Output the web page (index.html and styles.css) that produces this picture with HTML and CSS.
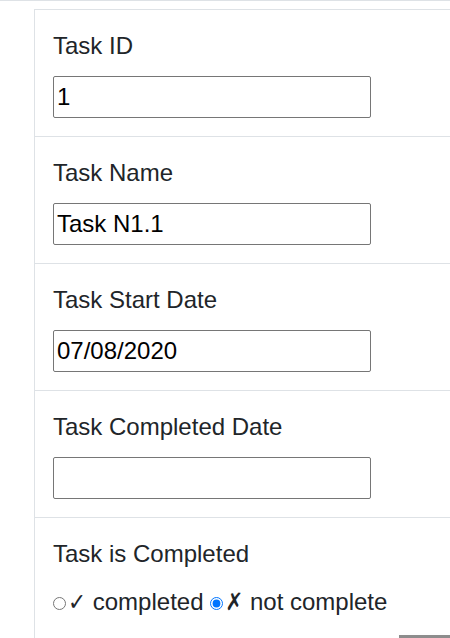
FILE: index.html
```html
<!DOCTYPE html>
<html lang="en">
<head>
<meta charset="utf-8">
<title>Task</title>
<link rel="stylesheet" href="styles.css">
</head>
<body>
<div class="topline"></div>
<div class="card">
  <div class="row">
    <label class="lbl" for="tid">Task ID</label>
    <input class="field" id="tid" type="text" value="1">
  </div>
  <div class="row">
    <label class="lbl" for="tname">Task Name</label>
    <input class="field" id="tname" type="text" value="Task N1.1">
  </div>
  <div class="row">
    <label class="lbl" for="tstart">Task Start Date</label>
    <input class="field" id="tstart" type="text" value="07/08/2020">
  </div>
  <div class="row">
    <label class="lbl" for="tdone">Task Completed Date</label>
    <input class="field" id="tdone" type="text" value="">
  </div>
  <div class="row">
    <div class="lbl">Task is Completed</div>
    <div class="radios"><input class="radio" type="radio" name="c" id="c1"><label for="c1"><span class="sym">✓</span> completed</label> <input class="radio" type="radio" name="c" id="c2" checked><label for="c2"><span class="sym">✗</span> not complete</label></div>
  </div>
</div>
<div class="floatbtn"></div>
</body>
</html>
```
FILE: styles.css
```css
html, body {
  margin: 0;
  padding: 0;
  overflow: hidden;
  background: #fff;
}
body {
  font-family: "Liberation Sans", Arial, sans-serif;
  color: #212529;
  height: 638px;
}
.topline {
  border-top: 1px solid #dee2e6;
}
.card {
  margin: 8px 0 0 34px;
  border-top: 1px solid #dee2e6;
  border-left: 1px solid #dee2e6;
}
.row {
  padding: 18px;
  border-bottom: 1px solid #dee2e6;
  display: flex;
  flex-direction: column;
  align-items: flex-start;
}
.lbl {
  display: block;
  font-size: 24px;
  line-height: 36px;
  margin-bottom: 12px;
}
.field {
  box-sizing: border-box;
  width: 318px;
  height: 42px;
  margin: 0;
  border: 1px solid #767676;
  border-radius: 2px;
  padding: 1px 3px;
  font-family: "Liberation Sans", Arial, sans-serif;
  font-size: 24px;
  color: #000;
  background: #fff;
}
.radios {
  font-size: 24px;
  line-height: 36px;
  white-space: nowrap;
}
.radio {
  margin: 3px 2px 0 0;
}
.sym {
  font-family: "DejaVu Sans Condensed", "DejaVu Sans", sans-serif;
  font-weight: bold;
}
.floatbtn {
  position: fixed;
  left: 399px;
  top: 635px;
  width: 51px;
  height: 3px;
  background: #8c8c8c;
  box-shadow: 0 0 10px rgba(0, 0, 0, 0.04);
}
```
